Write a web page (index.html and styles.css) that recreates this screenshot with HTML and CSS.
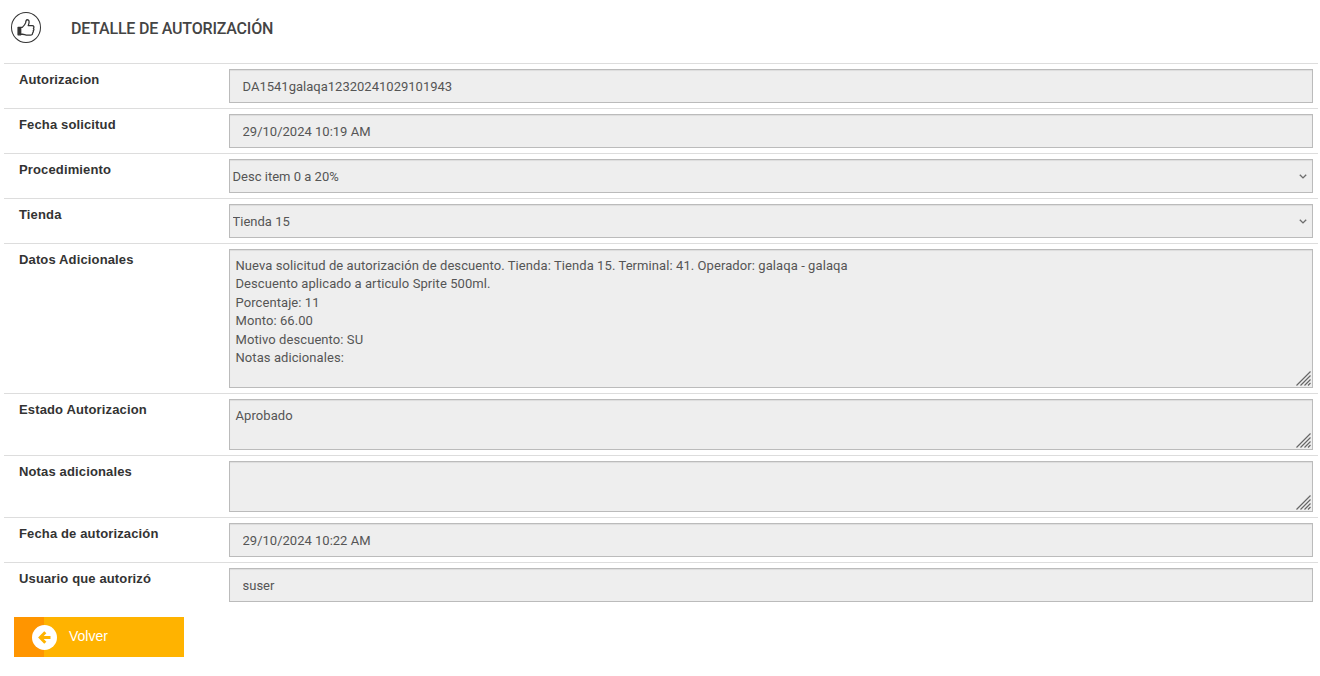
FILE: index.html
```html
<!DOCTYPE html>
<html lang="es">
<head>
    <meta charset="UTF-8">
    <meta name="viewport" content="width=device-width, initial-scale=1.0">
    <title>Detalle de autorización</title>
    <link rel="stylesheet" href="styles.css">
</head>
<body>
<div class="container">
    <div class="header">
        <span class="header-icon">
            <svg width="18" height="18" viewBox="0.3 0.3 17 17" fill="none" stroke="#333" stroke-width="1.2" stroke-linejoin="round">
                <path d="M1.300 8.200h2.500v7H1.300z" fill="#333"/>
                <path d="M4 8.200h1.300C6.800 6.800 8 5.300 8.400 4 8.600 2.600 8.800 1 9.800 1c1.400 0 2 1 1.900 2.400 0 1.100-.5 2.100-.8 3.200h3.800c1.500 0 2 1.500 1.100 2.500.6.800.4 1.800-.2 2.300.3.900 0 1.700-.6 2.100.1 1.300-.7 2.100-2 2.100H10.300c-2 0-3.300-.9-4.800-.9H4"/>
            </svg>
        </span>
        <h1>DETALLE DE AUTORIZACIÓN</h1>
    </div>
    <form id="detalleForm">
        <div class="form-group">
            <label for="autorizacion">Autorizacion</label>
            <input type="text" id="autorizacion" value="DA1541galaqa12320241029101943" readonly>
        </div>
        <div class="form-group">
            <label for="fecha_solicitud">Fecha solicitud</label>
            <input type="text" id="fecha_solicitud" value="29/10/2024 10:19 AM" readonly>
        </div>
        <div class="form-group">
            <label for="procedimiento">Procedimiento</label>
            <div class="field">
                <select id="procedimiento" disabled>
                    <option>Desc item 0 a 20%</option>
                </select>
                <svg class="arrow" width="8" height="5" viewBox="0 0 8 5"><path d="M.8.800 4 3.900 7.200.8" fill="none" stroke="#6d6d6d" stroke-width="1.400"/></svg>
            </div>
        </div>
        <div class="form-group">
            <label for="tienda">Tienda</label>
            <div class="field">
                <select id="tienda" disabled>
                    <option>Tienda 15</option>
                </select>
                <svg class="arrow" width="8" height="5" viewBox="0 0 8 5"><path d="M.8.800 4 3.900 7.200.8" fill="none" stroke="#6d6d6d" stroke-width="1.400"/></svg>
            </div>
        </div>
        <div class="form-group">
            <label for="datos">Datos Adicionales</label>
            <div class="field">
                <textarea id="datos" class="large" readonly>Nueva solicitud de autorización de descuento. Tienda: Tienda 15. Terminal: 41. Operador: galaqa - galaqa
Descuento aplicado a articulo Sprite 500ml.
Porcentaje: 11
Monto: 66.00
Motivo descuento: SU
Notas adicionales:</textarea>
                <svg class="grip" width="15" height="15" viewBox="0 0 15 15"><path d="M.5 14.500l14-14M4.500 14.500l10-10M8.500 14.500l6-6M12 14.500l2.500-2.500" stroke="#666" stroke-width="1.200"/></svg>
            </div>
        </div>
        <div class="form-group">
            <label for="estado">Estado Autorizacion</label>
            <div class="field">
                <textarea id="estado" readonly>Aprobado</textarea>
                <svg class="grip" width="15" height="15" viewBox="0 0 15 15"><path d="M.5 14.500l14-14M4.500 14.500l10-10M8.500 14.500l6-6M12 14.500l2.500-2.500" stroke="#666" stroke-width="1.200"/></svg>
            </div>
        </div>
        <div class="form-group">
            <label for="notas">Notas adicionales</label>
            <div class="field">
                <textarea id="notas" readonly></textarea>
                <svg class="grip" width="15" height="15" viewBox="0 0 15 15"><path d="M.5 14.500l14-14M4.500 14.500l10-10M8.500 14.500l6-6M12 14.500l2.500-2.500" stroke="#666" stroke-width="1.200"/></svg>
            </div>
        </div>
        <div class="form-group">
            <label for="fecha_autorizacion">Fecha de autorización</label>
            <input type="text" id="fecha_autorizacion" value="29/10/2024 10:22 AM" readonly>
        </div>
        <div class="form-group">
            <label for="usuario">Usuario que autorizó</label>
            <input type="text" id="usuario" value="suser" readonly>
        </div>
        <button type="button" class="back">
            <span class="back-icon">
                <svg width="13" height="13" viewBox="0 0 13 13" fill="none" stroke="#ffb300" stroke-width="3"><path d="M7.300 1.200 2.200 6.500l5.100 5.300M2.500 6.500h10"/></svg>
            </span>
            <span class="back-text">Volver</span>
        </button>
    </form>
</div>
</body>
</html>
```
FILE: styles.css
```css
body {
    font-family: Roboto, Arial, sans-serif;
    font-size: 13px;
    margin: 0;
    color: #555;
    background-color: #fff;
}
.container {
    padding: 0 2px 0 4px;
}
.header {
    display: flex;
    align-items: center;
    height: 55px;
    padding: 0 0 8px 7px;
}
.header-icon {
    display: flex;
    align-items: center;
    justify-content: center;
    box-sizing: border-box;
    width: 30px;
    height: 31px;
    border: 1px solid #333;
    border-radius: 50%;
}
h1 {
    margin: 2px 0 0 30px;
    font-size: 16px;
    font-weight: 500;
    letter-spacing: -0.2px;
    color: #444;
}
.form-group {
    display: grid;
    grid-template-columns: 210px 1fr;
    padding: 5px 5px 5px 15px;
    border-top: 1px solid #ddd;
}
.form-group label {
    padding-top: 3px;
    font-family: "Liberation Sans", Arial, sans-serif;
    font-weight: bold;
    line-height: 15px;
    letter-spacing: 0.14px;
    color: #333;
}
.field {
    position: relative;
}
.form-group input,
.form-group select,
.form-group textarea {
    display: block;
    width: 100%;
    height: 34px;
    margin: 0;
    box-sizing: border-box;
    font-family: inherit;
    font-size: 13px;
    letter-spacing: 0.01px;
    color: #555;
    background-color: #eee;
    border: 1px solid #bbb;
    border-radius: 0;
    box-shadow: inset 0 1px 1px rgba(0, 0, 0, 0.075);
    outline: none;
    opacity: 1;
}
.form-group input {
    padding: 6px 12.5px;
}
.form-group select {
    padding: 0 2.5px;
    appearance: none;
}
.form-group textarea {
    height: 51px;
    padding: 6.5px 5.5px 6px;
    line-height: 18.6px;
    letter-spacing: 0.08px;
    resize: none;
    overflow: hidden;
}
.form-group textarea.large {
    height: 139px;
}
.arrow {
    position: absolute;
    right: 6px;
    top: 15px;
}
.grip {
    position: absolute;
    right: 2px;
    bottom: 2px;
}
.back {
    display: flex;
    align-items: center;
    width: 170px;
    height: 40px;
    margin: 10px 0 0 10px;
    padding: 0 0 0 18px;
    border: none;
    font-family: "Liberation Sans", Arial, sans-serif;
    font-size: 14px;
    color: #fff;
    background: linear-gradient(to right, #ff9500 30px, #ffb300 30px);
    cursor: pointer;
}
.back-icon {
    display: flex;
    align-items: center;
    justify-content: center;
    width: 25px;
    height: 25px;
    margin-right: 12px;
    border-radius: 50%;
    background-color: #fff;
}
.back-icon svg {
    margin-right: 1px;
}
.back-text {
    margin-bottom: 2px;
}
```
